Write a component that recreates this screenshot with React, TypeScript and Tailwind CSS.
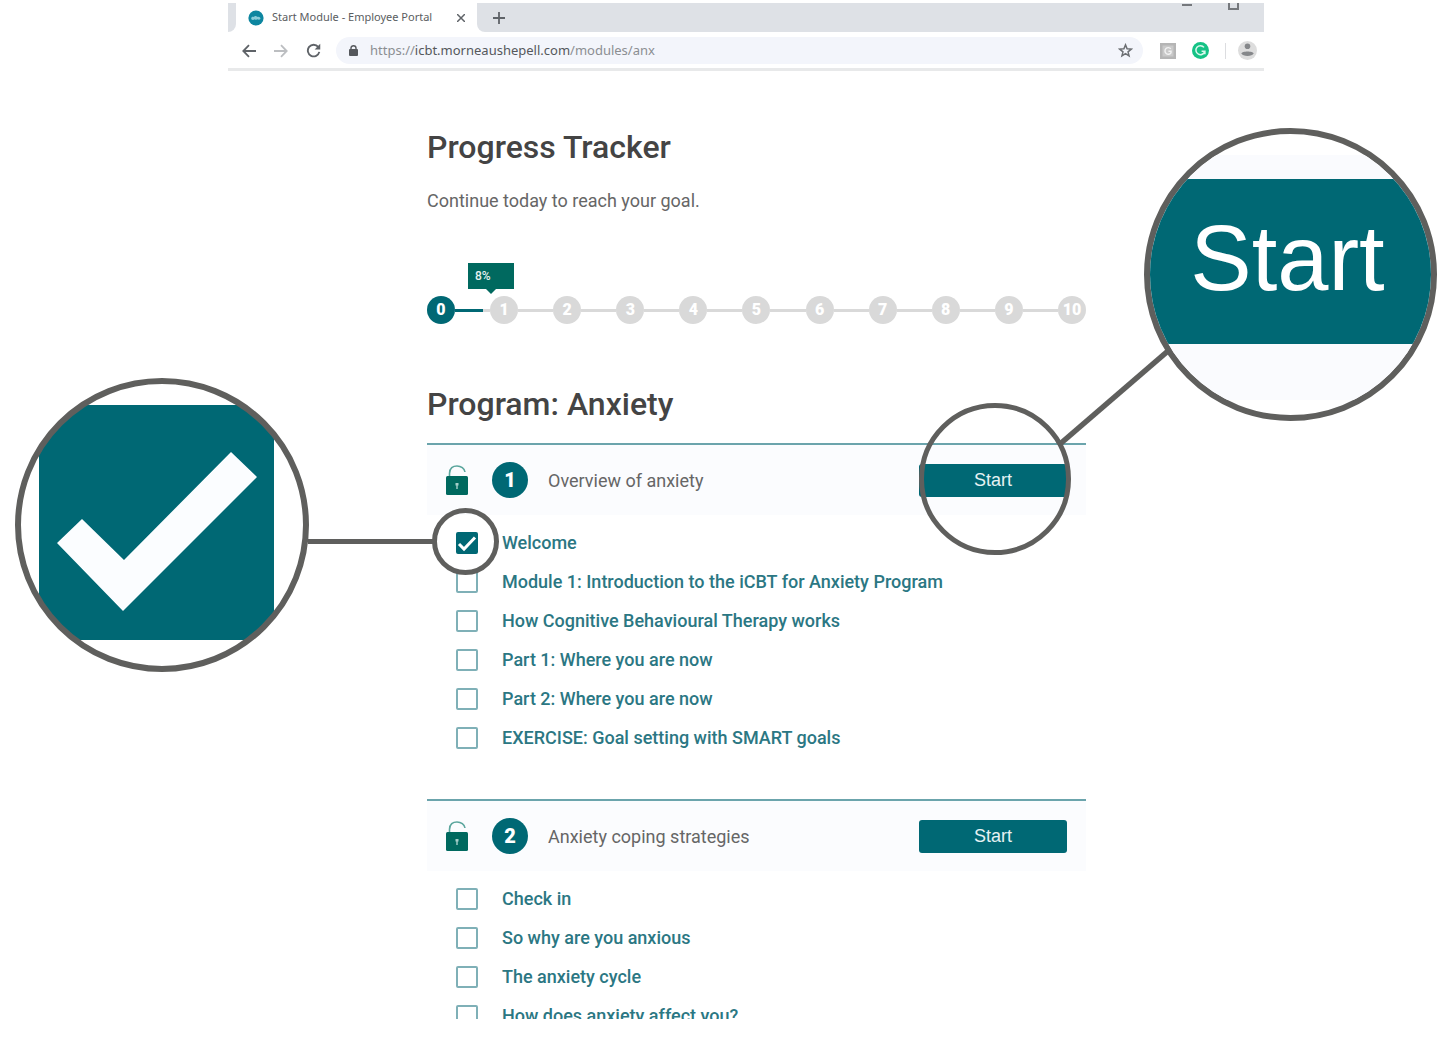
import type { ReactNode } from "react";

type Lesson = { id: string; title: string; done?: boolean };

const moduleOne: Lesson[] = [
  { id: "welcome", title: "Welcome", done: true },
  { id: "intro", title: "Module 1: Introduction to the iCBT for Anxiety Program" },
  { id: "cbt", title: "How Cognitive Behavioural Therapy works" },
  { id: "part-1", title: "Part 1: Where you are now" },
  { id: "part-2", title: "Part 2: Where you are now" },
  { id: "smart", title: "EXERCISE: Goal setting with SMART goals" },
];

const moduleTwo: Lesson[] = [
  { id: "check-in", title: "Check in" },
  { id: "why", title: "So why are you anxious" },
  { id: "cycle", title: "The anxiety cycle" },
  { id: "affect", title: "How does anxiety affect you?" },
];

function TabStrip() {
  return (
    <div className="flex h-[29px] bg-white">
      <div className="w-2 rounded-br-lg bg-[#dee1e6]" />
      <div className="flex w-[241px] items-center pl-3 pr-2">
        <svg className="mr-2 h-4 w-4 shrink-0" viewBox="0 0 16 16" aria-hidden="true">
          <circle cx="8" cy="8" r="7.6" fill="#0d86a0" />
          <path d="M3.500 9.500c-1.200-2.200 1.200-3.600 2.300-2.400 1-1.600 3-1 3.200 0 1.600-1 3.800.2 3.400 1.900-1 1.300-2.300.6-3.200.3-1.200.8-1.800.6-2.400 0-1 .7-2.400.9-3.300.2Z" fill="#8accd9" />
        </svg>
        <span className="flex-1 whitespace-nowrap text-[11px] text-[#5a5d61]">Start Module - Employee Portal</span>
        <button type="button" aria-label="Close tab" className="flex h-4 w-4 items-center justify-center">
          <svg className="h-2 w-2" viewBox="0 0 8 8" stroke="#5f6368" strokeWidth="1.500" aria-hidden="true">
            <path d="M0 0 8 8M8 0 0 8" />
          </svg>
        </button>
      </div>
      <div className="flex flex-1 justify-between rounded-bl-lg bg-[#dee1e6]">
        <button type="button" aria-label="New tab" className="ml-4 flex w-3 items-center justify-center">
          <svg className="h-3 w-3 shrink-0" viewBox="0 0 12 12" stroke="#5f6368" strokeWidth="1.800" aria-hidden="true">
            <path d="M6 0v12M0 6h12" />
          </svg>
        </button>
        <div className="flex items-start gap-9 pr-[25px]">
          <button type="button" aria-label="Minimize" className="flex w-[10px]">
            <svg className="h-[7px] w-[10px]" viewBox="0 0 10 7" aria-hidden="true">
              <path d="M0 2h10" stroke="#75787c" strokeWidth="2" />
            </svg>
          </button>
          <button type="button" aria-label="Maximize" className="flex w-[11px]">
            <svg className="h-[7px] w-[11px]" viewBox="0 0 11 7" aria-hidden="true">
              <path d="M1 0v6h9V0" fill="none" stroke="#75787c" strokeWidth="2" />
            </svg>
          </button>
        </div>
      </div>
    </div>
  );
}

function Toolbar() {
  return (
    <div className="flex h-[39px] items-center border-b-[3px] border-[#e8e9ea] bg-white pl-[14px] pr-[7px] pt-px">
      <button type="button" aria-label="Back" className="mr-[18px]">
        <svg className="h-[14px] w-[14px]" viewBox="0 0 14 14" fill="none" stroke="#5f6368" strokeWidth="1.800" aria-hidden="true">
          <path d="M14 7H1.500M7 1.200 1.300 7 7 12.800" />
        </svg>
      </button>
      <button type="button" aria-label="Forward" className="mr-[18px]">
        <svg className="h-[14px] w-[14px]" viewBox="0 0 14 14" fill="none" stroke="#bcbec1" strokeWidth="1.800" aria-hidden="true">
          <path d="M0 7h12.500M7 1.200 12.700 7 7 12.800" />
        </svg>
      </button>
      <button type="button" aria-label="Reload" className="mr-[15px]">
        <svg className="h-[15px] w-[15px]" viewBox="0 0 16 16" aria-hidden="true">
          <path d="M13 4.200A6.200 6.200 0 1 0 14.200 9.500" fill="none" stroke="#5f6368" strokeWidth="2" />
          <path d="M15.200.8v6H9.200Z" fill="#5f6368" />
        </svg>
      </button>
      <div className="flex h-[27px] flex-1 items-center rounded-full bg-[#f3f5fb] pl-[13px] pr-[10px]">
        <svg className="mr-3 h-[11px] w-[9px] shrink-0" viewBox="0 0 9 11" aria-hidden="true">
          <path d="M2 5V3a2.500 2.300 0 0 1 5 0V5" fill="none" stroke="#55585c" strokeWidth="1.400" />
          <rect y="4" width="9" height="7" rx="1" fill="#55585c" />
        </svg>
        <a href="#modules" className="flex-1 text-[13px] text-[#8b8e92]">
          https://<span className="text-[#55585c]">icbt.morneaushepell.com</span>/modules/anx
        </a>
        <button type="button" aria-label="Bookmark this page">
          <svg className="h-[15px] w-[15px]" viewBox="0 0 16 16" fill="none" stroke="#6c6f73" strokeWidth="1.600" aria-hidden="true">
            <path d="m8 2 1.700 4.200 4.500.3-3.500 2.900 1.100 4.400L8 11.400l-3.800 2.400 1.100-4.400L1.800 6.500l4.500-.3Z" />
          </svg>
        </button>
      </div>
      <button type="button" aria-label="Extension" className="ml-[17px] mr-4">
        <svg className="h-4 w-4" viewBox="0 0 16 16" aria-hidden="true">
          <rect width="16" height="16" fill="#b5b5b5" />
          <rect x="2.500" y="2.500" width="11" height="11" fill="#c9c9c9" />
          <path d="M10.800 5.800A3.300 3.300 0 1 0 11 9.800V8.300H8.400" fill="none" stroke="#f2f2f2" strokeWidth="1.400" />
        </svg>
      </button>
      <button type="button" aria-label="Writing assistant" className="mr-4">
        <svg className="h-[17px] w-[17px]" viewBox="0 0 17 17" aria-hidden="true">
          <circle cx="8.500" cy="8.500" r="8.500" fill="#15c285" />
          <path d="M12 5.400A4.500 4.500 0 1 0 12.800 9.200H9.600M12.900 9v3.200" fill="none" stroke="#d9f7ec" strokeWidth="1.500" />
        </svg>
      </button>
      <div className="mr-3 h-4 w-px bg-[#dcdde0]" />
      <button type="button" aria-label="Profile">
        <svg className="h-[19px] w-[19px]" viewBox="0 0 19 19" aria-hidden="true">
          <circle cx="9.500" cy="9.500" r="9.500" fill="#dddddd" />
          <circle cx="9.500" cy="5.300" r="2.800" fill="#85878a" />
          <path d="M3.500 12.600c0-2.800 12-2.800 12 0-.8 3.200-11.200 3.200-12 0Z" fill="#85878a" />
        </svg>
      </button>
    </div>
  );
}

function Tracker() {
  const steps = [0, 1, 2, 3, 4, 5, 6, 7, 8, 9, 10];
  return (
    <ol className="mt-[83px] flex items-center" aria-label="Progress">
      {steps.map((n) => (
        <li key={n} className={n === 0 ? "flex items-center" : "flex flex-1 items-center"}>
          {n > 0 && (
            <div className="relative h-[3px] flex-1 bg-[#d9d9d9]">
              {n === 1 && (
                <>
                  <div className="h-full w-4/5 bg-[#006874]" />
                  <div className="absolute bottom-[23px] left-[13px] flex h-[26px] w-[46px] items-center bg-[#00695f] pl-[7px] text-[12px] font-medium text-[#e6f2f0]">
                    8%
                    <svg className="absolute left-[18px] top-full h-[5px] w-[10px]" viewBox="0 0 10 5" aria-hidden="true">
                      <path d="M0 0h10L5 5Z" fill="#00695f" />
                    </svg>
                  </div>
                </>
              )}
            </div>
          )}
          <span
            className={
              n === 0
                ? "flex h-7 w-7 items-center justify-center rounded-full bg-[#006874] text-[16px] font-black text-white"
                : "flex h-7 w-7 items-center justify-center rounded-full bg-[#d9d9d9] text-[16px] font-black text-white"
            }
          >
            {n}
          </span>
        </li>
      ))}
    </ol>
  );
}

function OpenLock() {
  return (
    <svg className="h-[30px] w-[22px] shrink-0" viewBox="0 0 22 30" aria-label="Unlocked" role="img">
      <path d="M3.500 11V8.500C3.500 3 7 1 11 1s7.500 2.500 8 6" fill="none" stroke="#5ba69d" strokeWidth="1.600" />
      <rect y="11" width="22" height="19" rx="1.500" fill="#00695f" />
      <path d="M9.500 18h3v2.500h-.8V24h-1.400v-3.500h-.8Z" fill="#a6cfca" />
    </svg>
  );
}

function StartLens() {
  return (
    <div aria-hidden="true">
      <div className="pointer-events-none absolute -top-[61px] left-0 h-[152px] w-[152px] rounded-full border-[5px] border-[#5f5f5d]" />
      <svg className="pointer-events-none absolute -top-[115px] left-[139px] h-[98px] w-[112px]" viewBox="0 0 112 98">
        <path d="M2 95 110 2" stroke="#5f5f5d" strokeWidth="5.500" />
      </svg>
      <div className="pointer-events-none absolute -top-[336px] left-[225px] flex h-[293px] w-[293px] flex-col overflow-hidden rounded-full border-[6px] border-[#5f5f5d] bg-white">
        <div className="mt-[21px] h-6 shrink-0 bg-[#fafbfe]" />
        <div className="flex h-[165px] shrink-0 items-center justify-center bg-[#006874] pb-1.5 pr-1.5 font-['Liberation_Sans',sans-serif] text-[92px] leading-none text-white">
          Start
        </div>
        <div className="h-14 shrink-0 bg-[#fafbfe]" />
      </div>
    </div>
  );
}

function CheckLens() {
  return (
    <div aria-hidden="true">
      <div className="pointer-events-none absolute -left-6 -top-6 h-[67px] w-[67px] rounded-full border-[5px] border-[#5f5f5d]" />
      <div className="pointer-events-none absolute -left-[148px] top-[7px] h-[5px] w-[125px] bg-[#5f5f5d]" />
      <svg className="pointer-events-none absolute -left-[441px] -top-[154px] h-[294px] w-[294px]" viewBox="0 0 294 294">
        <clipPath id="lens">
          <circle cx="147" cy="147" r="143" />
        </clipPath>
        <circle cx="147" cy="147" r="144" fill="#ffffff" />
        <g clipPath="url(#lens)">
          <rect x="24" y="27" width="235" height="235" fill="#006874" />
          <path d="M42 165 67 141 109 182 216 74 242 99 108 233Z" fill="#fbfdff" />
        </g>
        <circle cx="147" cy="147" r="144" fill="none" stroke="#5f5f5d" strokeWidth="6" />
      </svg>
    </div>
  );
}

function ModuleHeader({ number, title, children }: { number: number; title: string; children?: ReactNode }) {
  return (
    <div className="flex h-[72px] items-center border-t-2 border-[#6ba4ac] bg-[#fbfcfe] pl-[19px] pr-[19px]">
      <OpenLock />
      <span className="ml-6 flex h-9 w-9 items-center justify-center rounded-full bg-[#006874] text-[20px] font-black text-white">
        {number}
      </span>
      <h3 className="ml-5 flex-1 text-[18px] text-[#666666]">{title}</h3>
      <div className="relative">
        <button
          type="button"
          className="block h-[33px] w-[148px] rounded-[3px] bg-[#006874] font-['Liberation_Sans',sans-serif] text-[18px] text-[#e6f2f3]"
        >
          Start
        </button>
        {children}
      </div>
    </div>
  );
}

function LessonRow({ lesson }: { lesson: Lesson }) {
  return (
    <li className="flex h-[39px] shrink-0 items-center">
      <div className="relative flex">
        <input
          id={lesson.id}
          type="checkbox"
          defaultChecked={lesson.done}
          className="peer h-[22px] w-[22px] appearance-none rounded-[2px] border-2 border-[#7fb0b7] bg-white checked:border-[#006874] checked:bg-[#006874]"
        />
        <svg className="pointer-events-none absolute inset-0 hidden h-[22px] w-[22px] peer-checked:block" viewBox="0 0 22 22" aria-hidden="true">
          <path d="m3 12 5 5L19 5.500" fill="none" stroke="#ffffff" strokeWidth="3" />
        </svg>
        {lesson.done && (
          <div className="absolute left-0 top-0 z-10">
            <CheckLens />
          </div>
        )}
      </div>
      <label htmlFor={lesson.id} className="ml-6 whitespace-nowrap text-[18px] font-medium text-[#2b7783]">
        {lesson.title}
      </label>
    </li>
  );
}

export default function App() {
  return (
    <div className="overflow-x-hidden bg-white pb-[18px] pt-[3px] font-[Roboto,sans-serif]">
      <div className="ml-[228px] mr-[184px]">
        <header className="font-['Noto_Sans',sans-serif]">
          <TabStrip />
          <Toolbar />
        </header>
        <main className="pl-[199px] pr-[178px] pt-14">
          <h1 className="text-[32px] font-medium leading-10 text-[#444444]">Progress Tracker</h1>
          <p className="mt-[22px] text-[18px] leading-6 text-[#666666]">Continue today to reach your goal.</p>
          <Tracker />
          <h2 className="mt-[60px] text-[32px] font-medium leading-10 text-[#444444]">Program: Anxiety</h2>
          <section className="mt-[19px]">
            <ModuleHeader number={1} title="Overview of anxiety">
              <StartLens />
            </ModuleHeader>
            <ul className="pb-[42px] pl-[29px] pt-2">
              {moduleOne.map((lesson) => (
                <LessonRow key={lesson.id} lesson={lesson} />
              ))}
            </ul>
          </section>
          <section>
            <ModuleHeader number={2} title="Anxiety coping strategies" />
            <ul className="flex h-[148px] flex-col overflow-hidden pl-[29px] pt-2">
              {moduleTwo.map((lesson) => (
                <LessonRow key={lesson.id} lesson={lesson} />
              ))}
            </ul>
          </section>
        </main>
      </div>
    </div>
  );
}
